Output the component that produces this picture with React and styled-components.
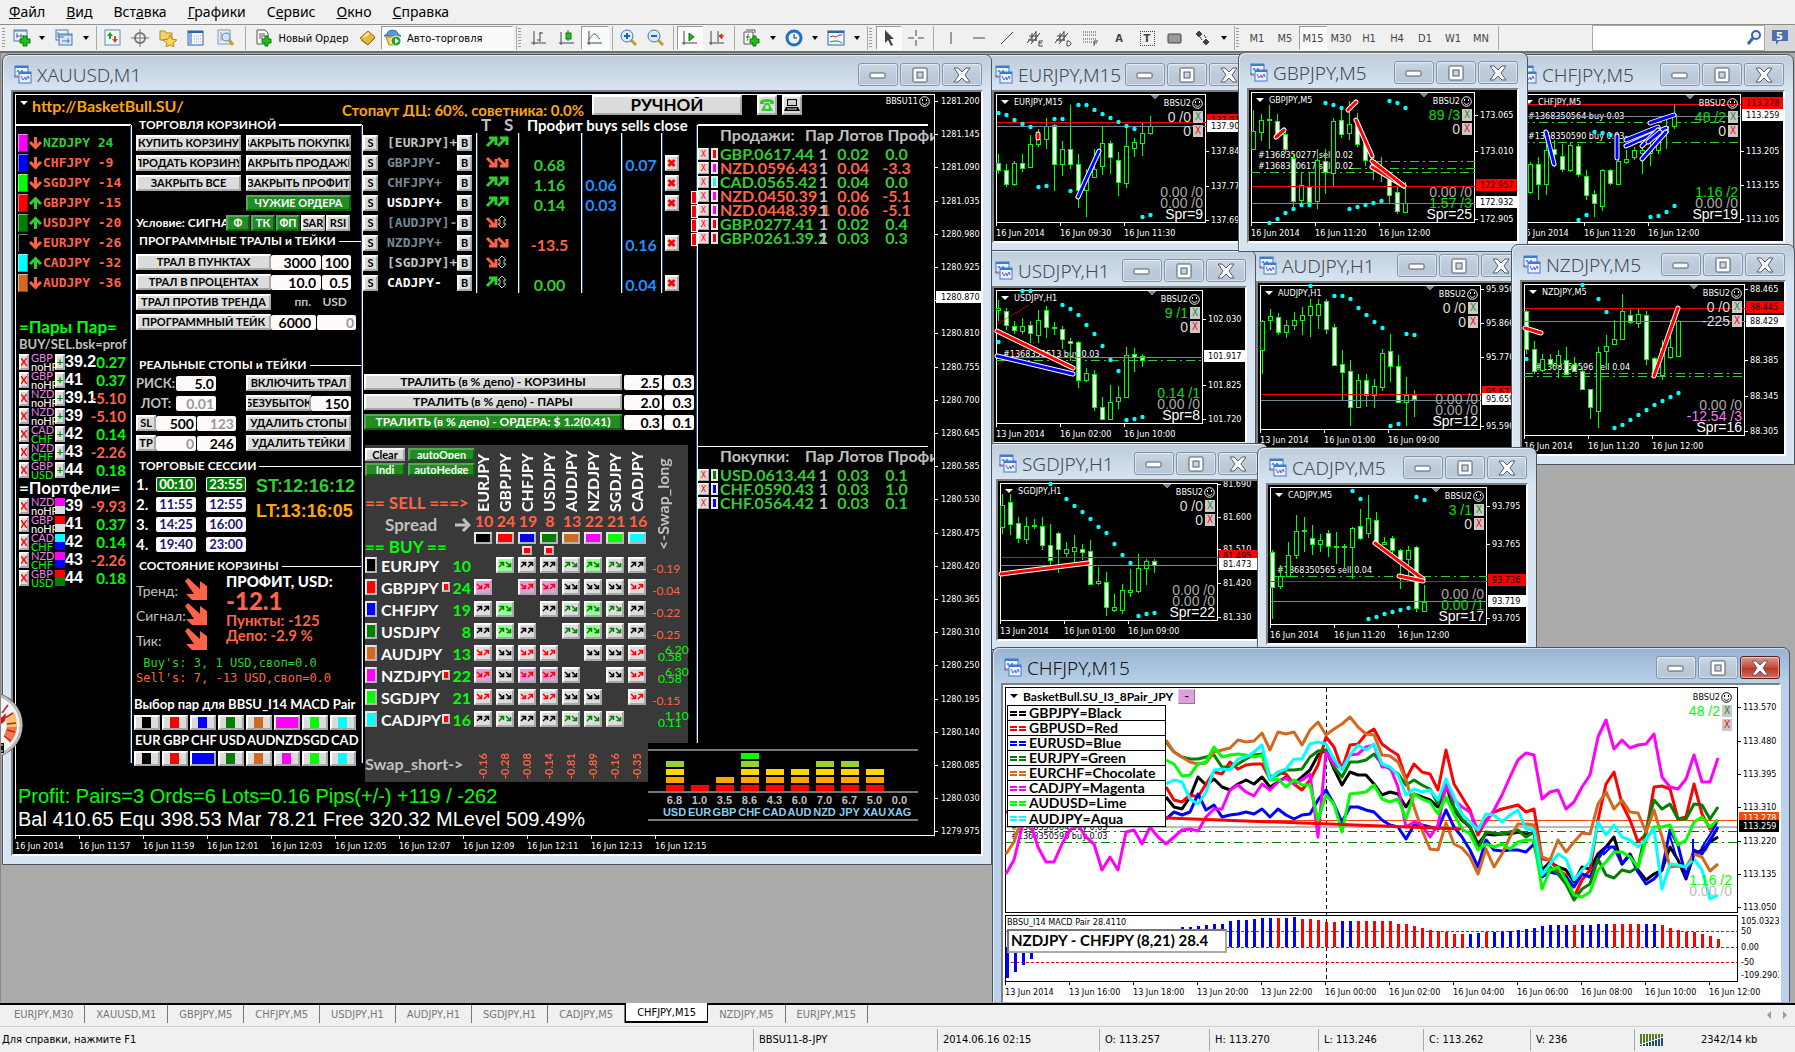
import React, { useState } from 'react'
import styled, { createGlobalStyle, css } from 'styled-components'

const UI = "'DejaVu Sans Condensed', 'Noto Sans', sans-serif"
const PANEL = "Lato, 'Open Sans', sans-serif"
const MONO = "'DejaVu Sans Mono', monospace"
const TITLE = "'Noto Sans', 'Open Sans', sans-serif"
const ARIAL = "'Liberation Sans', sans-serif"

const GlobalStyle = createGlobalStyle`
    * {
        box-sizing: border-box;
    }

    body {
        margin: 0;
        background: #ababab;
        font-family: ${UI};
        font-size: 11px;
    }

    button,
    input {
        font: inherit;
        margin: 0;
        padding: 0;
        border-radius: 0;
    }

    table {
        border-collapse: collapse;
        border-spacing: 0;
    }

    td,
    th {
        padding: 0;
        font-weight: inherit;
    }
`

const Page = styled.div`
    display: flex;
    flex-direction: column;
    height: 100vh;
    overflow: hidden;
`

/* ---------- menu and toolbar ---------- */

const MenuBar = styled.nav`
    display: flex;
    align-items: center;
    gap: 21px;
    height: 24px;
    padding: 0 9px 2px;
    background: #f0f0f0;
    font: 14px ${TITLE};

    a {
        color: #000;
        text-decoration: none;
    }
`

const ToolBar = styled.div`
    display: flex;
    align-items: center;
    height: 29px;
    padding-left: 4px;
    background: #f0f0f0;
    border-top: 1px solid #8e8e8e;
    border-bottom: 2px solid #6e6e6e;
    overflow: hidden;
`

const Tool = styled.button`
    display: flex;
    align-items: center;
    justify-content: ${(p) => (p.$start ? 'flex-start' : 'center')};
    gap: 5px;
    flex: none;
    width: ${(p) => p.$w || 28}px;
    height: 24px;
    padding-left: ${(p) => (p.$start ? 2 : 0)}px;
    border: 1px solid;
    border-color: ${(p) => (p.$on ? '#9a9a9a #fff #fff #9a9a9a' : 'transparent')};
    background: ${(p) => (p.$on ? '#fafafa' : 'transparent')};
    color: ${(p) => (p.$dark ? '#000' : '#444')};
    font-size: 11px;
    font-weight: ${(p) => (p.$bold ? 'bold' : 'normal')};
    white-space: nowrap;
`

const Caret = styled.span`
    flex: none;
    width: 14px;
    display: flex;
    justify-content: center;

    &::before {
        content: '';
        border: 3px solid transparent;
        border-top: 4px solid #000;
        border-bottom: 0;
    }
`

const Sep = styled.span`
    flex: none;
    width: 1px;
    height: 24px;
    margin: 0 3px;
    background: #a8a8a8;
`

const Grip = styled.span`
    flex: none;
    width: 3px;
    height: 21px;
    margin: 0 4px 0 -2px;
    background: repeating-linear-gradient(#999 0 1px, #f0f0f0 1px 3px);
`

const SearchBox = styled.label`
    display: flex;
    align-items: center;
    width: 173px;
    height: 26px;
    margin-left: auto;
    background: #fff;
    border: 1px solid #aaa;

    input {
        flex: 1;
        min-width: 0;
        border: 0;
        outline: 0;
    }
`

const Badge = styled.button`
    width: 30px;
    height: 26px;
    border: 0;
    background: #d8d8d8;
`

const INK = '#444'

const glyphs = {
    newChart: (
        <>
            <rect x="1" y="1" width="13" height="11" fill="#e8f2fc" stroke="#4a78b0" />
            <path d="M1 2h13M4 4v5M8 5v5M3 7h8" stroke="#4a78b0" fill="none" />
            <path d="M10 7h4v3h3v4h-3v3h-4v-3H7v-4h3z" fill="#19c519" stroke="#0a7a0a" />
        </>
    ),
    profiles: (
        <>
            <rect x="1" y="1" width="12" height="10" fill="#e8f2fc" stroke="#4a78b0" />
            <rect x="4" y="5" width="13" height="11" fill="#d6e7f8" stroke="#4a78b0" />
            <path d="M4 6h13M3 3v5h6M7 12h8M13 9v5" stroke="#4a78b0" fill="none" />
        </>
    ),
    market: (
        <>
            <rect x="1" y="1" width="15" height="15" fill="#f2f8ff" stroke="#5a8cc0" />
            <path d="M6 3l3 4H7v3H5V7H3z" fill="#19a519" />
            <path d="M11 14l3-4h-2V7h-2v3H8z" fill="#d04a1a" />
        </>
    ),
    aim: (
        <>
            <circle cx="9" cy="9" r="5" fill="none" stroke="#777" strokeWidth="2" />
            <path d="M9 0v18M0 9h18" stroke="#777" />
        </>
    ),
    star: (
        <>
            <path d="M1 2h5l1 2h6v7H1z" fill="#f0d468" stroke="#b08a20" />
            <path d="M11 6l2 4 5 1-4 3 1 4-4-2-4 2 1-4-4-3 5-1z" fill="#ffd84a" stroke="#b08a20" />
        </>
    ),
    navigator: (
        <>
            <rect x="1" y="2" width="15" height="14" fill="#f4f8fd" stroke="#2c62a8" />
            <path d="M1 3h15" stroke="#2c62a8" strokeWidth="2" />
            <rect x="2" y="4" width="3" height="11" fill="#7fb2e8" />
            <path d="M7 7h8M7 10h8M7 13h8" stroke="#9ab" strokeDasharray="1 1" />
        </>
    ),
    tester: (
        <>
            <rect x="1" y="1" width="12" height="14" fill="#e6edf5" stroke="#8298b0" />
            <path d="M4 3v9M10 3v4" stroke="#8298b0" />
            <circle cx="9" cy="8" r="4" fill="#cfe6fb" stroke="#6a92bd" />
            <path d="M12 11l4 5" stroke="#c89a28" strokeWidth="3" />
        </>
    ),
    order: (
        <>
            <path d="M2 1h8l3 3v11H2z" fill="#fff" stroke="#555" />
            <path d="M4 5h6M4 7h6M4 9h4" stroke="#555" />
            <path d="M10 7h3v3h3v4h-3v3h-3v-3H7v-4h3z" fill="#19c519" stroke="#0a7a0a" />
        </>
    ),
    book: (
        <>
            <path d="M1 9l8-7 7 6-7 8z" fill="#e8b83a" stroke="#9a6c10" />
            <path d="M2 11l7 5 7-7" fill="none" stroke="#9a6c10" />
            <path d="M5 8l5-4" stroke="#fff2b8" strokeWidth="2" />
        </>
    ),
    robot: (
        <>
            <path d="M3 5c0-5 11-5 11 0l3 2H0z" fill="#4d9fd6" stroke="#2a6f9f" />
            <path d="M2 8h13l-3 8H5z" fill="#f2d35a" stroke="#b08a20" />
            <circle cx="12" cy="12" r="5" fill="#1fa51f" stroke="#fff" />
            <path d="M11 9l4 3-4 3z" fill="#fff" />
        </>
    ),
    bars: <path d="M4 2v14M1 14h15M7 11h3M10 3v10M10 4h3" stroke={INK} fill="none" />,
    candle: (
        <>
            <path d="M3 3v13M1 14h15M10 1v11" stroke={INK} fill="none" />
            <rect x="8" y="4" width="5" height="6" fill="#25c225" stroke="#0a7a0a" />
        </>
    ),
    line: (
        <>
            <path d="M3 2v14M1 14h15" stroke={INK} fill="none" />
            <path d="M2 11c3-1 4-7 7-6s2 4 5 5" stroke="#2a8a2a" fill="none" />
        </>
    ),
    zoomIn: (
        <>
            <path d="M11 11l5 5" stroke="#c89a28" strokeWidth="3" />
            <circle cx="7" cy="7" r="6" fill="#d8ecfd" stroke="#3a76b8" />
            <path d="M4 7h6M7 4v6" stroke="#1f63b0" strokeWidth="2" />
        </>
    ),
    zoomOut: (
        <>
            <path d="M11 11l5 5" stroke="#c89a28" strokeWidth="3" />
            <circle cx="7" cy="7" r="6" fill="#d8ecfd" stroke="#3a76b8" />
            <path d="M4 7h6" stroke="#1f63b0" strokeWidth="2" />
        </>
    ),
    scroll: (
        <>
            <path d="M3 2v14M1 14h15" stroke={INK} fill="none" />
            <path d="M8 4l5 4-5 4z" fill="#25b225" stroke="#0a7a0a" />
        </>
    ),
    shift: (
        <>
            <path d="M3 2v14M1 14h15M10 2v11" stroke={INK} fill="none" />
            <path d="M16 7h-4M14 5l-3 2 3 3z" stroke="#c03a1a" fill="#c03a1a" />
        </>
    ),
    indicator: (
        <>
            <path d="M1 3h9v12H1z" fill="#fff" stroke="#555" />
            <path d="M3 1h9v3M6 5c-2 0-1 6-2 7M3 8h4" stroke="#555" fill="none" />
            <path d="M10 7h3v3h3v4h-3v3h-3v-3H7v-4h3z" fill="#19c519" stroke="#0a7a0a" />
        </>
    ),
    clock: (
        <>
            <circle cx="9" cy="9" r="7" fill="#eaf5ff" stroke="#1f6fc4" strokeWidth="3" />
            <path d="M9 5v4h3" stroke="#222" fill="none" />
        </>
    ),
    template: (
        <>
            <rect x="1" y="2" width="16" height="14" fill="#f2f8ff" stroke="#2c62a8" />
            <path d="M1 3h16" stroke="#2c62a8" strokeWidth="2" />
            <path d="M3 8l3-1 3 1 3-2 3 0" stroke="#a33" fill="none" />
            <path d="M3 13l4-1 4 0 4 2" stroke="#2a8a2a" fill="none" />
        </>
    ),
    cursor: <path d="M5 1v13l3-3 3 6 2-1-3-6h4z" fill={INK} />,
    cross: <path d="M9 1v6M9 11v6M1 9h6M11 9h6" stroke={INK} />,
    vline: <path d="M9 3v12" stroke={INK} />,
    hline: <path d="M3 9h12" stroke={INK} />,
    trend: <path d="M3 15L15 3" stroke={INK} />,
    chanE: (
        <>
            <path d="M1 14l9-11M5 15l9-11M3 7h9M2 11h9M6 4v9M10 2v10" stroke={INK} fill="none" />
            <path d="M17 12h-4v5h4M13 14h3" stroke={INK} fill="none" />
        </>
    ),
    chanD: (
        <>
            <path d="M1 14l9-11M5 15l9-11M3 7h9M2 11h9M6 4v9M10 2v10" stroke={INK} fill="none" />
            <path d="M13 12h2l2 2v1l-2 2h-2z" stroke={INK} fill="none" />
        </>
    ),
    fibo: (
        <>
            <path d="M1 3h14M1 6h14M1 10h14M1 13h9" stroke={INK} strokeDasharray="1 1" />
            <path d="M16 12h-4v5M12 14h3" stroke={INK} fill="none" />
        </>
    ),
    rect: <rect x="2" y="5" width="13" height="9" rx="1" fill="#999" stroke={INK} />,
    arrows: <path d="M5 2l3 3-3 3-3-3zM12 10l3 3-3 3-3-3zM6 8l2 3M10 6l2 3" fill={INK} stroke={INK} />,
    search: (
        <>
            <circle cx="10" cy="6" r="4" fill="#e4f0ff" stroke="#3a62b8" strokeWidth="2" />
            <path d="M7 9l-5 6" stroke="#3a62b8" strokeWidth="3" />
        </>
    )
}

const Glyph = ({ name }) => (
    <svg width="18" height="18" viewBox="0 0 18 18" aria-hidden="true">
        {glyphs[name]}
    </svg>
)

const LabelTool = styled(Tool)`
    span {
        width: 15px;
        border: 1px dotted #444;
        line-height: 13px;
    }
`

const menu = [
    ['', 'Ф', 'айл'],
    ['', 'В', 'ид'],
    ['Вст', 'а', 'вка'],
    ['', 'Г', 'рафики'],
    ['С', 'е', 'рвис'],
    ['', 'О', 'кно'],
    ['', 'С', 'правка']
]

/* ---------- child windows ---------- */

const Desktop = styled.main`
    position: relative;
    flex: 1;
    min-height: 0;
    overflow: hidden;
    background: #ababab;
    border-left: 1px solid #888;
`

const Win = styled.section`
    position: absolute;
    left: ${(p) => p.$x}px;
    top: ${(p) => p.$y}px;
    width: ${(p) => p.$w}px;
    height: ${(p) => p.$h}px;
    display: flex;
    flex-direction: column;
    padding: 0 8px 8px;
    border: 1px solid #4c5561;
    border-radius: 7px 7px 0 0;
    background: ${(p) =>
        p.$active
            ? 'linear-gradient(#99b4d1, #b9d1ea 36px)'
            : 'linear-gradient(#bfcddb, #d7e4f2 36px)'};
    box-shadow: inset 1px 1px 0 rgba(255, 255, 255, 0.6);
`

const TitleBar = styled.header`
    display: flex;
    align-items: center;
    flex: none;
    height: 35px;
    padding: 4px 1px 0 3px;

    h2 {
        flex: 1;
        margin: 0 0 0 5px;
        font: 300 19px ${TITLE};
        color: ${(p) => (p.$active ? '#111' : '#444b52')};
        white-space: nowrap;
    }
`

const WinButton = styled.button`
    display: flex;
    align-items: center;
    justify-content: center;
    width: 40px;
    height: 23px;
    margin-left: 2px;
    border: 1px solid ${(p) => (p.$red ? '#5a1f1f' : '#8494aa')};
    border-radius: 3px;
    background: ${(p) =>
        p.$red
            ? 'linear-gradient(#dc9a90, #c4483a 50%, #b83422 52%, #d0705a)'
            : 'linear-gradient(#cbd8e6, #bccad9 50%, #b9c8d8)'};
    box-shadow: inset 0 0 0 1px rgba(255, 255, 255, 0.45);
`

const View = styled.div`
    flex: 1;
    min-height: 0;
    display: grid;
    grid-template: minmax(0, 1fr) / minmax(0, 1fr);
    border: 2px solid;
    border-color: #808080 #fff #fff #808080;
    background: ${(p) => (p.$light ? '#fff' : '#000')};
    overflow: hidden;

    > * {
        grid-area: 1 / 1;
    }
`

const Svg = styled.svg`
    display: block;
    font: 9px ${UI};
`

const WinIcon = () => (
    <svg width="18" height="19" viewBox="0 0 18 19" aria-hidden="true">
        <rect x="1" y="1" width="13" height="11" fill="#e8f1fc" stroke="#3f7ad0" />
        <path d="M1 2h13" stroke="#3f7ad0" strokeWidth="2" />
        <path d="M3 7l1-2 2 4 2-4 1 3" stroke="#3f7ad0" fill="none" />
        <path d="M0 11h4" stroke="#e04040" />
        <rect x="5" y="7" width="12" height="11" fill="#e8f1fc" stroke="#3f7ad0" />
        <path d="M5 8h12" stroke="#3f7ad0" strokeWidth="2" />
        <path d="M7 11l2 4 2-3 1 3 2-4 1 3" stroke="#6a62c8" fill="none" />
    </svg>
)

const buttonGlyph = {
    min: <rect x="3" y="6" width="15" height="5" rx="1" fill="#fff" stroke="#555b66" />,
    max: (
        <>
            <rect x="4" y="1" width="14" height="14" rx="1" fill="#fff" stroke="#555b66" />
            <rect x="8" y="5" width="6" height="6" fill="#c8d4e2" stroke="#555b66" />
        </>
    ),
    close: (
        <path
            d="M3 1h4l4 4 4-4h4l-5 7 5 7h-4l-4-4-4 4H3l5-7z"
            fill="#fff"
            stroke="#555b66"
            strokeLinejoin="round"
        />
    )
}

const Window = ({ title, x, y, w, h, active, light, children }) => (
    <Win $x={x - 1} $y={y - 53} $w={w} $h={h} $active={active}>
        <TitleBar $active={active}>
            <WinIcon />
            <h2>{title}</h2>
            {['min', 'max', 'close'].map((kind) => (
                <WinButton key={kind} aria-label={kind} $red={active && kind === 'close'}>
                    <svg width="22" height="16" viewBox="0 0 22 16">
                        {buttonGlyph[kind]}
                    </svg>
                </WinButton>
            ))}
        </TitleBar>
        <View $light={light}>{children}</View>
    </Win>
)

const Smiley = ({ color }) => (
    <svg width="11" height="11" viewBox="0 0 11 11" aria-hidden="true">
        <circle cx="5.5" cy="5.5" r="4.8" fill="none" stroke={color} />
        <path d="M3 6.500c1 2.500 4 2.500 5 0" fill="none" stroke={color} />
        <rect x="3" y="3" width="1" height="2" fill={color} />
        <rect x="7" y="3" width="1" height="2" fill={color} />
    </svg>
)

/* ---------- small candle charts ---------- */

const LIME = '#00ff00'
const step = (i) => 2 + i * 8

const Chart = ({ w, h, axis, data }) => (
    <Svg width={w + axis + 2} height={h + 20} fill="#fff" shapeRendering="crispEdges">
        <g transform="translate(2 2)">
            <rect x="0.500" y="0.500" width={w - 1} height={h - 1} fill="none" stroke="#fff" />
            {(data.dash || []).map(([y, from = 0]) => (
                <path key={y} d={`M${from} ${y + 0.5}H${w}`} stroke="#32cd32" strokeDasharray="9 4 2 4" />
            ))}
            {(data.orders || []).map(([x, y, text]) => (
                <text key={text} x={x} y={y + 3}>
                    {text}
                </text>
            ))}
            {data.candles.map(([hi, lo, top, bottom, full], i) => (
                <g key={i} stroke={LIME}>
                    <path d={`M${step(i) + 0.5} ${hi}V${lo}`} />
                    <rect
                        x={step(i) - 1.5}
                        y={top + 0.5}
                        width="4"
                        height={Math.max(1, bottom - top)}
                        fill={full ? '#fff' : '#000'}
                    />
                </g>
            ))}
            {data.ask && <path d={`M1 ${data.ask + 0.5}H${w}`} stroke="#f00" />}
            <path d={`M1 ${data.bid + 0.5}H${w}`} stroke="#778899" />
            <g shapeRendering="auto">
                {data.dots.map(([i, y]) => (
                    <circle key={`${i}-${y}`} cx={step(i) + 0.5} cy={y} r="2.2" fill="#0ff" />
                ))}
                {(data.thin || []).map((d) => (
                    <path key={d} d={d} stroke="#f00" strokeDasharray="2 1" />
                ))}
                {(data.trades || []).map(([color, d]) => (
                    <g key={d} fill="none" strokeLinecap="round">
                        <path d={d} stroke="#fff" strokeWidth="5" />
                        <path d={d} stroke={color} strokeWidth="3" />
                    </g>
                ))}
            </g>
            <path d={`M${w - 55} 1h8l-4 5z`} fill="#778899" />
            {data.prices.map(([y, text, kind]) => (
                <g key={text}>
                    {kind ? (
                        <rect x={w + 1} y={y - 6} width={axis} height="12" fill={kind === 'ask' ? '#f00' : '#fff'} />
                    ) : (
                        <path d={`M${w} ${y + 0.5}h3`} stroke="#fff" />
                    )}
                    <text x={w + 5} y={y + 3} fill={kind ? '#000' : '#fff'}>
                        {text}
                    </text>
                </g>
            ))}
            {data.times.map((text, i) => (
                <g key={text}>
                    <path d={`M${i * 64 + 0.5} ${h}v3`} stroke="#fff" />
                    <text x={i * 64} y={h + 13}>
                        {text}
                    </text>
                </g>
            ))}
        </g>
    </Svg>
)

const ChartInfo = styled.div`
    display: grid;
    grid-template-columns: 1fr auto;
    align-content: space-between;
    width: ${(p) => p.$w}px;
    height: ${(p) => p.$h}px;
    padding: 5px 3px 3px 7px;
    color: #fff;
    font: 14px/13px ${ARIAL};
`

const ChartName = styled.div`
    display: flex;
    align-items: center;
    align-self: ${(p) => (p.$bold ? 'center' : 'start')};
    gap: 5px;
    height: 10px;
    font: ${(p) => (p.$bold ? `bold 12px ${PANEL}` : `9px ${UI}`)};

    &::before {
        content: '';
        border: 4px solid transparent;
        border-top: 4px solid currentColor;
        border-bottom: 0;
    }
`

const Expert = styled.div`
    display: flex;
    align-items: center;
    justify-content: flex-end;
    gap: 1px;
    height: 12px;
    margin: 0 0 2px auto;
    color: ${(p) => p.$c || '#fff'};
    font: 9px ${UI};
`

const Count = styled.div`
    display: flex;
    justify-content: flex-end;
    gap: 2px;
    height: 14px;
    color: ${(p) => p.$c};
`

const Sums = styled.div`
    grid-column: 1 / -1;
    padding-top: ${(p) => p.$top || 0}px;
    text-align: right;
`

const Sum = styled.div`
    height: ${(p) => (p.$last ? 12 : 11)}px;
    color: ${(p) => p.$c};
`

const CloseX = styled.button`
    width: 10px;
    height: 12px;
    border: 0;
    background: #c8c8c8;
    color: ${(p) => p.$c};
    font: 10px/12px ${UI};
`

const GRAY = '#a9a9a9'
const GREEN = '#00e000'

const CandleWindow = ({ title, x, y, w, h, axis, data }) => {
    const pw = w - axis - 24
    const ph = h - 69
    const [orders, other, sum1, sum2, spread] = data.info
    return (
        <Window title={title} x={x} y={y} w={w} h={h}>
            <Chart w={pw} h={ph} axis={axis} data={data} />
            <ChartInfo $w={pw + 2} $h={ph + 2}>
                <ChartName>{title}</ChartName>
                <div>
                    <Expert>
                        BBSU2
                        <Smiley color="#fff" />
                    </Expert>
                    <Count $c={orders[1]}>
                        {orders[0]}
                        <CloseX $c="#228b22">X</CloseX>
                    </Count>
                    <Count $c="#dcdcdc">
                        {other}
                        <CloseX $c="#f00">X</CloseX>
                    </Count>
                </div>
                <Sums>
                    <Sum $c={sum1[1]}>{sum1[0]}</Sum>
                    <Sum $c={sum2[1]}>{sum2[0]}</Sum>
                    <Sum $c="#fff" $last>
                        {spread}
                    </Sum>
                </Sums>
            </ChartInfo>
        </Window>
    )
}

const charts = [
    {
        title: 'CHFJPY,M5', x: 1507, y: 54, w: 287, h: 198, axis: 42,
        data: {
            candles: [
                [68, 98, 72, 95], [68, 100, 70, 98], [63, 106, 70, 90, 1], [40, 101, 56, 90],
                [46, 73, 55, 60, 1], [50, 78, 62, 75, 1], [48, 78, 51, 76], [50, 83, 52, 80, 1],
                [76, 106, 82, 101, 1], [96, 123, 100, 109, 1], [75, 117, 76, 112], [75, 91, 76, 89, 1],
                [66, 90, 67, 90], [56, 70, 65, 68], [53, 66, 56, 63], [48, 80, 56, 59],
                [48, 72, 56, 59], [35, 60, 39, 56], [26, 55, 32, 38], [11, 35, 21, 32]
            ],
            dots: [[9, 38], [10, 39], [11, 41], [13, 44], [7, 126], [8, 121], [16, 123], [17, 122], [18, 118], [19, 112]],
            ask: 10, bid: 22, dash: [[28], [48]],
            orders: [[8, 22, '#1368350564 buy 0.03'], [8, 42, '#1368350590 buy 0.03']],
            trades: [
                ['#00f', 'M26 38L34 70'], ['#00f', 'M97 42V64'], ['#00f', 'M130 29L154 21'],
                ['#00f', 'M106 46L138 33'], ['#00f', 'M106 52L146 34'], ['#00f', 'M122 52L138 36'],
                ['#00f', 'M122 65L146 38'], ['#00f', 'M128 48L140 38']
            ],
            prices: [[57, '113.205'], [91, '113.155'], [125, '113.105'], [9, '113.278', 'ask'], [21, '113.259', 'bid']],
            times: ['16 Jun 2014', '16 Jun 11:20', '16 Jun 12:00'],
            info: [['48 /2', GREEN], '0', ['1.16 /2', GREEN], ['0.00 /0', GRAY], 'Spr=19']
        }
    },
    {
        title: 'EURJPY,M15', x: 983, y: 54, w: 276, h: 198, axis: 42,
        data: {
            candles: [
                [60, 80, 69, 76, 1], [70, 93, 76, 90, 1], [67, 92, 69, 90], [60, 78, 69, 74, 1],
                [41, 73, 50, 73], [35, 53, 45, 50], [24, 55, 32, 45], [30, 97, 31, 70, 1],
                [47, 82, 55, 70], [11, 75, 55, 70, 1], [60, 114, 70, 96, 1], [75, 123, 83, 96],
                [55, 84, 75, 83], [32, 81, 49, 72], [47, 80, 49, 63, 1], [58, 102, 66, 88, 1],
                [32, 94, 52, 89], [44, 63, 48, 54], [29, 62, 39, 49], [22, 41, 32, 39]
            ],
            dots: [
                [0, 19], [1, 21], [2, 26], [3, 30], [4, 33], [7, 25], [8, 25], [10, 11], [11, 11], [12, 16],
                [13, 20], [14, 24], [15, 28], [16, 32], [17, 35], [5, 93], [6, 92], [9, 97], [18, 123], [19, 121]
            ],
            ask: 28, bid: 32,
            trades: [['#f00', 'M42 40V44'], ['#00f', 'M82 103L103 57']],
            prices: [[57, '137.845'], [92, '137.770'], [126, '137.695'], [26, '137.918', 'ask'], [32, '137.909', 'bid']],
            times: ['16 Jun 2014', '16 Jun 09:30', '16 Jun 11:30'],
            info: [['0 /0', '#dcdcdc'], '0', ['0.00 /0', GRAY], ['0.00 /0', GRAY], 'Spr=9']
        }
    },
    {
        title: 'AUDJPY,H1', x: 1247, y: 245, w: 284, h: 214, axis: 39,
        data: {
            candles: [
                [35, 89, 36, 65], [24, 45, 31, 35], [28, 50, 32, 47, 1], [35, 53, 40, 47],
                [27, 45, 35, 40], [22, 50, 30, 35], [14, 52, 21, 30], [14, 44, 19, 30],
                [14, 49, 16, 44, 1], [39, 80, 42, 80, 1], [65, 115, 79, 87, 1], [75, 141, 86, 122, 1],
                [89, 122, 95, 122], [89, 122, 95, 110, 1], [94, 123, 101, 110], [64, 106, 68, 102],
                [49, 97, 66, 81, 1], [70, 118, 81, 117, 1], [92, 141, 110, 117], [105, 132, 110, 114, 1]
            ],
            dots: [
                [6, 1], [9, 11], [10, 11], [11, 14], [12, 23], [13, 30], [14, 37], [15, 43],
                [18, 49], [19, 50], [16, 141], [17, 139]
            ],
            ask: 109, bid: 115,
            prices: [
                [4, '95.950'], [38, '95.860'], [72, '95.770'], [141, '95.590'],
                [107, '95.673', 'ask'], [114, '95.659', 'bid']
            ],
            times: ['13 Jun 2014', '16 Jun 01:00', '16 Jun 09:00'],
            info: [['0 /0', '#dcdcdc'], '0', ['0.00 /0', GRAY], ['0.00 /0', GRAY], 'Spr=12']
        }
    },
    {
        title: 'USDJPY,H1', x: 983, y: 250, w: 273, h: 203, axis: 42,
        data: {
            candles: [
                [10, 31, 18, 20], [18, 40, 21, 35, 1], [31, 44, 36, 40, 1], [28, 44, 36, 41],
                [31, 53, 35, 43, 1], [20, 53, 30, 45], [16, 48, 20, 37, 1], [32, 45, 37, 38],
                [36, 59, 39, 49, 1], [48, 71, 51, 53, 1], [51, 98, 52, 90, 1], [78, 92, 83, 90],
                [80, 121, 84, 117, 1], [107, 130, 117, 129, 1], [95, 129, 112, 129], [96, 119, 107, 111],
                [57, 107, 65, 107], [58, 82, 64, 67, 1], [64, 77, 66, 70, 1]
            ],
            dots: [
                [0, 52], [3, 1], [4, 1], [8, 15], [9, 19], [10, 25], [11, 35], [12, 44], [13, 56],
                [14, 70], [15, 81], [16, 130], [17, 129], [18, 127]
            ],
            bid: 67, dash: [[70]],
            thin: ['M1 34L33 15', 'M1 75L39 52'],
            orders: [[7, 64, '#1368350613 buy 0.03']],
            trades: [['#f00', 'M1 41L77 78'], ['#00f', 'M1 66L77 84']],
            prices: [[29, '102.030'], [95, '101.825'], [129, '101.720'], [66, '101.917', 'bid']],
            times: ['13 Jun 2014', '16 Jun 02:00', '16 Jun 10:00'],
            info: [['9 /1', GREEN], '0', ['0.14 /1', GREEN], ['0.00 /0', GRAY], 'Spr=8']
        }
    },
    {
        title: 'GBPJPY,M5', x: 1238, y: 52, w: 290, h: 200, axis: 42,
        data: {
            candles: [
                [18, 57, 39, 57], [22, 49, 28, 40], [13, 57, 27, 28, 1], [22, 46, 29, 44, 1],
                [38, 62, 42, 57, 1], [62, 115, 66, 109, 1], [80, 112, 93, 108], [80, 115, 95, 110, 1],
                [57, 117, 68, 109], [57, 102, 69, 80, 1], [26, 95, 29, 81], [17, 46, 28, 42, 1],
                [9, 48, 32, 41], [21, 55, 33, 52, 1], [47, 74, 51, 68, 1], [62, 88, 68, 77, 1],
                [65, 90, 76, 80, 1], [83, 112, 84, 103, 1], [95, 122, 100, 119, 1], [90, 120, 111, 120]
            ],
            dots: [
                [9, 11], [10, 13], [11, 16], [17, 9], [18, 11], [19, 16], [2, 131], [3, 127], [4, 121], [5, 117],
                [6, 113], [7, 113], [12, 117], [13, 115], [14, 113], [15, 111], [16, 109]
            ],
            ask: 94, bid: 111, dash: [[69, 121], [76, 101], [80]],
            orders: [[7, 63, '#1368350277 sell 0.02'], [7, 74, '#1368350617 sell 0.02']],
            trades: [
                ['#f00', 'M25 45L33 38'], ['#f00', 'M97 18L105 10'], ['#f00', 'M105 28L121 64'],
                ['#f00', 'M121 75L153 94'], ['#f00', 'M121 69L153 94']
            ],
            prices: [[23, '173.065'], [59, '173.010'], [127, '172.905'], [93, '172.957', 'ask'], [110, '172.932', 'bid']],
            times: ['16 Jun 2014', '16 Jun 11:20', '16 Jun 12:00'],
            info: [['89 /3', GREEN], '0', ['0.00 /0', GRAY], ['1.57 /3', GREEN], 'Spr=25']
        }
    },
    {
        title: 'NZDJPY,M5', x: 1511, y: 244, w: 284, h: 221, axis: 39,
        data: {
            candles: [
                [26, 70, 27, 65, 1], [57, 90, 65, 87, 1], [70, 88, 75, 86], [70, 86, 75, 80, 1],
                [66, 94, 71, 81], [63, 91, 76, 90, 1], [73, 88, 80, 87, 1], [83, 105, 87, 105, 1],
                [105, 135, 105, 123, 1], [63, 144, 68, 127], [51, 85, 62, 67], [36, 61, 55, 60],
                [10, 56, 27, 55], [26, 40, 31, 38, 1], [25, 44, 30, 39], [27, 81, 31, 75, 1],
                [73, 93, 74, 91, 1], [56, 96, 64, 91], [36, 75, 63, 73], [36, 73, 37, 72]
            ],
            dots: [
                [0, 75], [7, 1], [9, 15], [10, 28], [11, 144], [12, 141], [13, 136], [14, 131], [15, 126],
                [16, 121], [17, 117], [18, 113], [19, 109]
            ],
            ask: 24, bid: 37, dash: [[89], [92]],
            orders: [[11, 83, '#1368350596 sell 0.04']],
            trades: [['#f00', 'M1 44L17 49'], ['#f00', 'M130 92L154 24']],
            prices: [
                [5, '88.465'], [76, '88.385'], [112, '88.345'], [147, '88.305'],
                [23, '88.445', 'ask'], [37, '88.429', 'bid']
            ],
            times: ['16 Jun 2014', '16 Jun 11:20', '16 Jun 12:00'],
            info: [['0 /0', '#dcdcdc'], '-225', ['0.00 /0', GRAY], ['-12.54 /3', '#ee82ee'], 'Spr=16']
        }
    },
    {
        title: 'SGDJPY,H1', x: 987, y: 443, w: 281, h: 207, axis: 39,
        data: {
            candles: [
                [11, 51, 22, 44], [11, 52, 19, 41, 1], [34, 60, 40, 55, 1], [34, 61, 43, 56],
                [36, 46, 42, 43], [34, 67, 43, 62, 1], [41, 82, 62, 77, 1], [49, 90, 50, 66, 1],
                [59, 74, 66, 70], [52, 79, 64, 68], [61, 77, 66, 69, 1], [57, 101, 68, 101, 1],
                [84, 102, 98, 100], [89, 133, 99, 124, 1], [111, 129, 124, 127], [101, 131, 107, 127],
                [86, 114, 107, 109], [71, 110, 85, 108], [76, 102, 78, 85], [76, 90, 78, 82, 1]
            ],
            dots: [
                [6, 1], [8, 16], [9, 23], [10, 29], [11, 36], [12, 44], [13, 50], [14, 61], [15, 72],
                [16, 80], [17, 133], [18, 131], [19, 130]
            ],
            ask: 74, bid: 82,
            trades: [['#f00', 'M1 91L88 80']],
            prices: [
                [1, '81.690'], [34, '81.600'], [66, '81.510'], [100, '81.420'], [134, '81.330'],
                [73, '81.495', 'ask'], [81, '81.473', 'bid']
            ],
            times: ['13 Jun 2014', '16 Jun 01:00', '16 Jun 09:00'],
            info: [['0 /0', '#dcdcdc'], '0', ['0.00 /0', GRAY], ['0.00 /0', GRAY], 'Spr=22']
        }
    },
    {
        title: 'CADJPY,M5', x: 1257, y: 447, w: 280, h: 207, axis: 39,
        data: {
            candles: [
                [63, 132, 65, 100, 1], [78, 102, 89, 99], [55, 90, 68, 89], [28, 72, 44, 68],
                [30, 65, 43, 44], [38, 68, 51, 57, 1], [47, 65, 53, 57], [43, 70, 46, 59, 1],
                [45, 77, 59, 60], [57, 82, 59, 60], [40, 92, 41, 60], [22, 53, 39, 51, 1],
                [8, 51, 31, 46], [25, 58, 33, 56, 1], [50, 58, 55, 57], [49, 67, 51, 63, 1],
                [62, 102, 63, 72, 1], [59, 93, 63, 72], [59, 125, 60, 121, 1], [98, 125, 115, 124]
            ],
            dots: [
                [10, 4], [11, 12], [18, 10], [19, 13], [12, 132], [13, 130], [14, 127], [15, 125],
                [16, 123], [17, 121]
            ],
            ask: 94, bid: 114, dash: [[89]],
            orders: [[7, 83, '#1368350565 sell 0.04']],
            trades: [['#f00', 'M105 56L153 92'], ['#f00', 'M129 89L153 94']],
            prices: [
                [19, '93.795'], [57, '93.765'], [131, '93.705'],
                [93, '93.736', 'ask'], [114, '93.719', 'bid']
            ],
            times: ['16 Jun 2014', '16 Jun 11:20', '16 Jun 12:00'],
            info: [['3 /1', GREEN], '0', ['0.00 /0', GRAY], ['0.00 /1', GREEN], 'Spr=17']
        }
    }
]

/* ---------- CHFJPY,M15 comparison chart ---------- */

const series = [
    ['#000', 20, [470, 500, 505, 470, 410, 435, 415, 440, 450, 430, 420, 430, 410, 440, 425, 410, 430, 410, 390, 345, 330, 385, 435, 395, 405, 405, 430, 465, 455, 460, 500, 460, 470, 480, 500, 435, 510, 540, 560, 610, 580, 585, 580, 580, 575, 580, 578, 690, 665, 680, 690, 725, 680, 685, 640, 620, 590, 670, 640, 690, 720, 700, 690, 620, 660, 715, 640, 630, 605, 590]],
    ['#f00', 20, [440, 480, 485, 465, 470, 430, 395, 400, 365, 385, 375, 370, 370, 415, 395, 400, 430, 450, 420, 375, 290, 320, 385, 315, 310, 280, 265, 310, 330, 345, 415, 370, 395, 400, 450, 330, 430, 470, 510, 585, 540, 515, 505, 500, 495, 515, 505, 655, 660, 690, 705, 770, 720, 690, 540, 430, 395, 490, 540, 605, 580, 440, 438, 445, 535, 530, 430, 520, 565, 540]],
    ['#00f', 20, [535, 515, 525, 515, 460, 510, 495, 530, 525, 520, 515, 520, 505, 530, 505, 525, 535, 525, 520, 480, 450, 490, 545, 500, 500, 510, 515, 540, 555, 560, 595, 555, 555, 560, 565, 510, 560, 590, 630, 680, 600, 630, 632, 630, 630, 635, 610, 710, 695, 700, 710, 740, 700, 710, 655, 620, 620, 670, 645, 695, 730, 715, 690, 570, 615, 710, 630, 640, 600, 560]],
    ['#008000', 20, [305, 335, 350, 355, 355, 350, 345, 380, 380, 370, 355, 345, 340, 410, 405, 390, 388, 385, 350, 332, 330, 380, 410, 365, 365, 360, 340, 370, 385, 400, 435, 420, 435, 445, 490, 420, 500, 535, 560, 625, 575, 578, 580, 575, 570, 590, 575, 700, 680, 700, 730, 780, 745, 730, 655, 705, 712, 690, 695, 680, 570, 480, 505, 490, 535, 535, 490, 495, 535, 500]],
    ['#d2691e', 0, [640, 605, 530, 480]],
    ['#d2691e', 20, [298, 335, 350, 365, 372, 368, 335, 330, 322, 300, 305, 303, 278, 330, 275, 280, 275, 315, 270, 245, 285, 265, 250, 230, 260, 280, 285, 345, 348, 365, 420, 500, 570, 625, 628, 548, 610, 622, 650, 700, 625, 680, 640, 590, 550, 550, 555, 650, 658, 600, 635, 605, 578, 582, 490, 455, 505, 480, 515, 518, 575, 510, 590, 680, 678, 680, 640, 650, 693, 672]],
    ['#f0f', 0, [700, 660, 560, 545, 620, 665, 665, 610, 570, 555, 590, 610, 690, 650, 690, 575, 570, 612, 560, 590, 610, 590, 570, 565, 572, 530, 505, 505, 450, 435, 455, 468, 430, 450, 425, 412, 430, 420, 400, 590, 335, 370, 385, 345, 340, 320, 315, 380, 380, 440, 560, 545, 555, 590, 555, 435, 480, 500, 515, 570, 545, 510, 465, 410, 360, 338, 345, 475, 455, 450, 505, 485, 440, 405, 290, 240, 325, 300, 322, 315, 310, 280, 410, 440, 445, 415, 345, 425, 425, 352]],
    ['#0f0', 20, [360, 370, 408, 405, 370, 365, 320, 350, 345, 340, 345, 350, 345, 420, 415, 440, 418, 435, 435, 540, 465, 490, 575, 460, 458, 455, 435, 475, 485, 475, 535, 460, 475, 485, 520, 470, 520, 565, 580, 630, 610, 620, 610, 625, 605, 600, 600, 745, 690, 680, 720, 765, 770, 755, 690, 665, 635, 635, 650, 680, 600, 560, 560, 555, 615, 600, 545, 530, 560, 540]],
    ['#0ff', 20, [430, 420, 425, 475, 490, 455, 390, 385, 390, 355, 350, 335, 315, 415, 395, 385, 355, 355, 310, 305, 310, 355, 390, 345, 315, 330, 310, 370, 380, 405, 465, 445, 455, 450, 480, 415, 470, 520, 545, 570, 520, 525, 545, 525, 510, 565, 570, 705, 670, 640, 655, 720, 690, 665, 545, 585, 555, 590, 600, 620, 595, 565, 745, 670, 675, 680, 655, 690, 775, 765]]
]

const macd = [860, 860, 858, 855, 852, 850, 843, 838, 838, 835, 833, 833, 833, 833, 831, 835, 835, 840, 845, 845, 843, 843, 843, 843, 843, 843, 843, 850, 852, 858, 863, 870, 873, 876, 880, 880, 880, 878, 876, 876, 874, 872, 868, 865, 862, 858, 855, 855, 855, 855, 855, 855, 852, 850, 852, 852, 852, 852, 852, 850, 853, 862, 870, 874, 876, 880, 888, 895]
const macdColors = 'bbbbbbbbbbbbrbbrrrrrbbrrrrrrrrrrrrrrbbrbbbbbbbbbbrbbbbrrrrbbrrrrrrrr'

const legend = [
    ['GBPJPY=Black', '#000'],
    ['GBPUSD=Red', '#f00'],
    ['EURUSD=Blue', '#00f'],
    ['EURJPY=Green', '#008000'],
    ['EURCHF=Chocolate', '#d2691e'],
    ['CADJPY=Magenta', '#f0f'],
    ['AUDUSD=Lime', '#0f0'],
    ['AUDJPY=Aqua', '#0ff']
]

const bigPrices = [
    [20, '113.570'], [54, '113.480'], [87, '113.395'], [120, '113.310'], [154, '113.220'],
    [187, '113.135'], [220, '113.050'], [131, '113.278', '#ff4500'], [139, '113.259', '#000']
]

const bigTimes = [
    '13 Jun 2014', '13 Jun 16:00', '13 Jun 18:00', '13 Jun 20:00', '13 Jun 22:00', '16 Jun 00:00',
    '16 Jun 02:00', '16 Jun 04:00', '16 Jun 06:00', '16 Jun 08:00', '16 Jun 10:00', '16 Jun 12:00'
]

const level = (v) => Math.round((v - 140) / 3)

const CompareChart = () => (
    <Svg width="778" height="317" fill="#000" shapeRendering="crispEdges">
        <g transform="translate(2 2)">
            <rect x="0.500" y="0.500" width="732" height="225" fill="none" stroke="#000" />
            <rect x="0.500" y="228.500" width="732" height="66" fill="none" stroke="#000" />
            <path d="M1 144.500H732M1 155.500H732" stroke="#008000" strokeDasharray="9 4 2 4" />
            <path d="M1 139.500H732" stroke="#b8b8b8" strokeWidth="2" />
            <path d="M250 133.500H732" stroke="#ff4500" />
            <path d="M321.500 1V295" stroke="#000" strokeDasharray="4 3" />
            <text x="6" y="143">
                #1368350564 buy 0.03
            </text>
            <text x="6" y="152">
                #1368350590 buy 0.03
            </text>
            <g fill="none" strokeWidth="3" shapeRendering="auto" strokeLinejoin="round">
                {series.map(([color, start, values], n) => (
                    <polyline
                        key={n}
                        stroke={color}
                        points={values.map((v, i) => `${(start + i) * 8 + 1},${level(v)}`).join(' ')}
                    />
                ))}
                <path d="M1 125L456 142" stroke="#f00" />
                <path
                    d="M598 168l8 -8M664 146l8 26M688 152v22M696 162l16 -26M700 164l12 -22"
                    stroke="#00f"
                    strokeWidth="2"
                />
            </g>
            <path d="M1 244.500H732M1 260.500H732M1 275.500H732" stroke="#f00" strokeDasharray="3 2" />
            {[1013, 995, 975, 957].map((v, i) => (
                <path key={v} d={`M${i * 8 + 2} 260V${level(v)}`} stroke="#00f" strokeWidth="3" />
            ))}
            {macd.map((v, i) => (
                <path
                    key={i}
                    d={`M${(i + 22) * 8 + 1} 260V${level(v)}`}
                    stroke={macdColors[i] === 'b' ? '#00f' : '#f00'}
                    strokeWidth="3"
                />
            ))}
            {bigPrices.map(([y, text, fill]) => (
                <g key={text}>
                    {fill ? (
                        <rect x="734" y={y - 6} width="42" height="12" fill={fill} />
                    ) : (
                        <path d={`M733 ${y + 0.5}h3`} stroke="#000" />
                    )}
                    <text x="738" y={y + 3} fill={fill ? '#fff' : '#000'}>
                        {text}
                    </text>
                </g>
            ))}
            <text x="736" y="237">105.0323</text>
            <text x="736" y="247">50</text>
            <text x="736" y="263">0.00</text>
            <text x="736" y="278">-50</text>
            <text x="736" y="291">-109.2903</text>
            {bigTimes.map((text, i) => (
                <g key={text}>
                    <path d={`M${i * 64 + 0.5} 295v3`} stroke="#000" />
                    <text x={i * 64} y="308">
                        {text}
                    </text>
                </g>
            ))}
        </g>
    </Svg>
)

const CompareInfo = styled.div`
    display: grid;
    grid-template-columns: auto 1fr;
    align-content: start;
    width: 733px;
    height: 317px;
    padding: 2px 4px 0 4px;
    color: #000;
`

const CompareSide = styled.div`
    padding-top: 4px;
    font: 14px/13px ${ARIAL};
`

const CompareHead = styled.div`
    display: flex;
    align-items: center;
    gap: 5px;
    height: 18px;
    padding-left: 3px;
`

const Minus = styled.button`
    width: 17px;
    height: 15px;
    border: 1px solid;
    border-color: #eec0ee #a070a0 #a070a0 #eec0ee;
    background: #dda0dd;
    font: bold 12px/10px ${PANEL};
`

const Legend = styled.ul`
    width: 159px;
    margin: 0;
    padding: 0;
    list-style: none;
    background: #fff;
    border: 1px solid #000;

    li {
        display: flex;
        align-items: center;
        gap: 3px;
        height: 15px;
        padding-left: 2px;
        border-bottom: 1px solid #000;
        font: bold 14px/14px ${PANEL};
    }

    li:last-child {
        border: 0;
    }
`

const LegendMark = styled.span`
    width: 16px;
    height: 5px;
    border: solid ${(p) => p.$c};
    border-width: 2px 0;
    mask: linear-gradient(90deg, #000 7px, transparent 7px 9px, #000 9px);
`

const MacdLabel = styled.div`
    margin-top: 88px;
    font: 9px/14px ${UI};
`

const MacdBox = styled.div`
    width: 220px;
    height: 24px;
    padding-left: 2px;
    border: 2px solid;
    border-color: #777 #aaa #aaa #777;
    background: #fff;
    font: bold 15px/18px ${PANEL};
`

const CompareWindow = () => (
    <Window title="CHFJPY,M15" x={992} y={647} w={798} h={366} active light>
        <CompareChart />
        <CompareInfo>
            <div>
                <CompareHead>
                    <ChartName $bold>BasketBull.SU_I3_8Pair_JPY</ChartName>
                    <Minus>-</Minus>
                </CompareHead>
                <Legend>
                    {legend.map(([text, color]) => (
                        <li key={text}>
                            <LegendMark $c={color} />
                            {text}
                        </li>
                    ))}
                </Legend>
                <MacdLabel>BBSU_I14 MACD Pair 28.4110</MacdLabel>
                <MacdBox>NZDJPY - CHFJPY (8,21) 28.4</MacdBox>
            </div>
            <CompareSide>
                <Expert $c="#000">
                    BBSU2
                    <Smiley color="#000" />
                </Expert>
                <Count $c="#0f0">
                    48 /2
                    <CloseX $c="#228b22">X</CloseX>
                </Count>
                <Count $c="#c0c0c0">
                    <CloseX $c="#f00">X</CloseX>
                </Count>
                <Sums $top={141}>
                    <Sum $c="#0f0">1.16 /2</Sum>
                    <Sum $c="#c0c0c0">0.00 /0</Sum>
                </Sums>
            </CompareSide>
        </CompareInfo>
    </Window>
)

/* ---------- XAUUSD,M1 trading panel ---------- */

const TOMATO = '#ff6347'
const SILVER = '#c0c0c0'

const Plot = styled.div`
    display: flex;
    flex-direction: column;
    width: 920px;
    height: 742px;
    margin: 2px 0 0 2px;
    border: 1px solid #fff;
    color: #fff;
    font: bold 14px/16px ${PANEL};
    overflow: hidden;
    white-space: nowrap;
`

const Head = styled.div`
    display: flex;
    height: 22px;
    padding: 0 4px;
    color: #ffa500;

    a {
        width: 310px;
        color: inherit;
        font-size: 16px;
        line-height: 22px;
        text-decoration: none;
    }
`

const DownMark = styled.span`
    width: 12px;
    padding-top: 6px;

    &::before {
        content: '';
        display: block;
        width: 0;
        border: 4px solid transparent;
        border-top: 4px solid #fff;
        border-bottom: 0;
    }
`

const StopOut = styled.div`
    width: 250px;
    font-size: 15px;
    line-height: 30px;
`

const face = css`
    border: 2px solid;
    border-color: ${(p) => (p.$green ? '#55a855 #0b640b #0b640b #55a855' : '#fff #a8a8a8 #a8a8a8 #fff')};
    background: ${(p) => (p.$green ? '#228b22' : '#dcdcdc')};
    color: ${(p) => p.$c || (p.$green ? '#fff' : '#000')};
`

const Btn = styled.button`
    ${face}
    display: flex;
    align-items: center;
    justify-content: center;
    flex: none;
    width: ${(p) => p.$w}px;
    height: ${(p) => p.$h || 16}px;
    margin-right: ${(p) => p.$gap || 0}px;
    font: bold ${(p) => p.$size || 11}px/12px ${PANEL};
    overflow: hidden;
    white-space: nowrap;
`

const Field = styled.input`
    flex: none;
    width: ${(p) => p.$w}px;
    height: 15px;
    margin-right: ${(p) => p.$gap || 0}px;
    padding: 0 ${(p) => (p.$w < 45 ? 2 : 5)}px;
    border: 0;
    border-radius: 2px;
    background: ${(p) => (p.$green ? '#008000' : '#fffafa')};
    box-shadow: ${(p) => (p.$green ? 'inset 0 0 0 1px #fff' : 'none')};
    color: ${(p) => p.$c || '#000'};
    font: bold ${(p) => (p.$align ? 13 : 14)}px/15px ${PANEL};
    text-align: ${(p) => p.$align || 'right'};
`

const Panels = styled.div`
    display: grid;
    grid-template-columns: 115px 231px 335px 1fr;
    height: 664px;
`

const Column = styled.div`
    min-width: 0;
`

const Ruled = styled(Column)`
    height: ${(p) => p.$h}px;
    margin-top: 8px;
    border-left: 1px solid #fff;
    box-shadow: -1px 0 0 #1d4f80;

    > :first-child {
        margin-top: -8px;
    }
`

const Rule = styled.hr`
    width: ${(p) => p.$w || 115}px;
    height: ${(p) => p.$thick || 2}px;
    margin: ${(p) => p.$top || 7}px 0 ${(p) => p.$below ?? 7}px;
    border: 0;
    background: #fff;
`

const RankRow = styled.div`
    display: flex;
    align-items: center;
    height: 20px;
    padding-left: 2px;
    color: ${(p) => p.$c};
    font: bold 13px/20px ${MONO};
    white-space: pre;

    &::before {
        content: '';
        width: 8px;
        height: 16px;
        background: ${(p) => p.$bar};
        border: 1px solid;
        border-color: rgba(255, 255, 255, 0.5) rgba(0, 0, 0, 0.3) rgba(0, 0, 0, 0.3) rgba(255, 255, 255, 0.5);
    }

    svg {
        margin: 0 1px;
    }
`

const Arrow = ({ up }) => (
    <svg width="13" height="14" viewBox="0 0 13 14" aria-hidden="true">
        <path
            d={up ? 'M6.500 13V3M1 8l5.500-5.500L12 8' : 'M6.500 1v10M1 6l5.500 5.500L12 6'}
            fill="none"
            stroke={up ? '#32cd32' : TOMATO}
            strokeWidth="3"
        />
    </svg>
)

const PairsTitle = styled.div`
    margin-top: ${(p) => p.$top || 0}px;
    padding-left: 3px;
    color: ${(p) => p.$c};
    font-size: 17px;
    line-height: ${(p) => p.$lh}px;
`

const PairsNote = styled.div`
    padding-left: 3px;
    color: ${SILVER};
    font-size: 13px;
    line-height: 14px;
    margin-bottom: 2px;
`

const PortRow = styled.div`
    display: grid;
    grid-template-columns: 12px 24px 10px 25px 36px;
    align-items: center;
    height: 18px;
    padding-left: 3px;
    font: bold 16px/18px ${ARIAL};

    output {
        display: flex;
        justify-content: flex-end;
        color: ${(p) => (p.$neg ? TOMATO : '#0f0')};
        font: bold 15px/18px ${PANEL};
    }
`

const PortNames = styled.div`
    font: 11px/9px ${PANEL};
    color: ${(p) => p.$c};

    span {
        display: block;
        color: #ee82ee;
    }
`

const Pair2 = styled.div`
    height: 16px;
    background: linear-gradient(${(p) => p.$a} 8px, ${(p) => p.$b} 8px);
`

const Heading = styled.h3`
    display: flex;
    align-items: center;
    height: 16px;
    margin: ${(p) => p.$top || 0}px 0 ${(p) => p.$below || 0}px 7px;
    font: bold 12px/16px ${PANEL};

    &::after {
        content: '';
        flex: 1;
        height: ${(p) => p.$line || 1}px;
        margin-left: 3px;
        background: #fff;
    }
`

const Row = styled.div`
    display: flex;
    align-items: center;
    height: 20px;
    margin-top: ${(p) => p.$top || 0}px;
    padding-left: ${(p) => p.$pad ?? 4}px;
    font-size: ${(p) => p.$size || 14}px;
`

const Text = styled.span`
    flex: none;
    width: ${(p) => p.$w}px;
    color: ${(p) => p.$c || '#fff'};
    font-size: ${(p) => p.$size || 13}px;
    text-align: ${(p) => p.$align || 'left'};
`

const Sessions = styled.div`
    display: grid;
    grid-template-columns: 124px 1fr;
    height: 80px;
`

const Clock = styled.div`
    color: ${(p) => p.$c};
    font: bold 18px/25px ${ARIAL};
`

const State = styled.div`
    display: grid;
    grid-template-columns: 49px 41px 1fr;
    padding: 0 0 0 4px;
    height: 82px;
`

const StateList = styled.div`
    padding-top: 4px;
    font: 14px/25px ${PANEL};
    color: ${SILVER};

    svg {
        display: block;
        margin-bottom: 2px;
    }
`

const Profit = styled.div`
    color: ${TOMATO};
    font-size: 15px;
    line-height: 15px;

    b {
        display: block;
        color: #fff;
    }

    strong {
        display: block;
        font-size: 24px;
        line-height: 24px;
    }
`

const Swaps = styled.div`
    padding-left: 4px;
    color: ${(p) => p.$c};
    font: 12px/15px ${MONO};
    white-space: pre;
`

const PickRow = styled.div`
    display: grid;
    grid-template-columns: repeat(8, 28px);
    align-items: center;
    height: ${(p) => p.$h}px;
    padding-left: 2px;
    font-size: 13px;

    span {
        padding-left: 1px;
    }
`

const Pick = styled.button`
    ${face}
    width: 26px;
    height: 15px;
    background: ${(p) =>
        p.$on ? p.$fill : `linear-gradient(90deg, #dcdcdc 6px, ${p.$fill} 6px 15px, #dcdcdc 15px)`};
`

const CHead = styled.div`
    display: flex;
    height: 16px;
    padding-left: 118px;
    background: #000;
    font-size: 15px;

    span {
        width: 23px;
        color: ${SILVER};
        font-size: 17px;
    }
`

const Quotes = styled.table`
    table-layout: fixed;
    width: 334px;

    td {
        height: 20px;
        vertical-align: middle;
        text-align: center;
    }

    td.pair {
        font: bold 13px/20px ${MONO};
        text-align: left;
    }

    td.line {
        border-left: 1px solid #fff;
        box-shadow: inset 1px 0 0 #1d4f80;
    }

    td.num {
        height: 20px;
        padding-top: 4px;
        color: #1e90ff;
        font-size: 16px;
        line-height: 16px;
    }

    td.gain {
        color: #32cd32;
    }

    td.loss {
        color: ${TOMATO};
    }

    td.close {
        padding-left: 3px;
    }
`

const diag = {
    u: 'M2 10L10 2M4 2h7v7',
    d: 'M2 2l8 8M4 10h7V3'
}

const TrendPair = ({ kind }) => (
    <svg width="24" height="14" viewBox="0 0 24 14" aria-hidden="true">
        {kind.split('').map((k, i) =>
            k === 'n' ? (
                <path key={i} d="M17 1l4 4h-2v4h2l-4 4-4-4h2V5h-2z" fill="#000" stroke={SILVER} />
            ) : (
                <path
                    key={i}
                    d={diag[k]}
                    transform={`translate(${i * 11} 1)`}
                    fill="none"
                    stroke={k === 'u' ? '#32cd32' : TOMATO}
                    strokeWidth="3"
                />
            )
        )}
    </svg>
)

const Trails = styled.div`
    margin: 79px 0 13px;
`

const Matrix = styled.table`
    table-layout: fixed;
    width: 323px;
    margin-left: 2px;
    background: #393939;

    th {
        vertical-align: top;
        text-align: left;
    }

    tbody td {
        height: 22px;
        vertical-align: top;
    }

    td.name {
        font-size: 16px;
        line-height: 17px;
    }

    td.num {
        color: #0f0;
        font-size: 16px;
        line-height: 17px;
        text-align: right;
        padding-right: 3px;
    }

    th.long {
        padding-left: 4px;
    }

    tfoot td {
        height: 49px;
        vertical-align: middle;
        color: ${SILVER};
        font-size: 16px;
        padding-top: 12px;
    }
`

const SwapCell = styled.td`
    padding: ${(p) => (p.$plus ? '1px 0 0 8px' : '6px 0 0 2px')};
    color: ${(p) => (p.$plus ? '#0f0' : TOMATO)};
    font: 12px/${(p) => (p.$plus ? 7 : 12)}px ${PANEL};

    div {
        padding-left: 7px;
    }
`

const Vertical = styled.span`
    display: block;
    writing-mode: vertical-rl;
    transform: rotate(180deg);
    height: ${(p) => p.$h}px;
    width: 18px;
    color: ${(p) => p.$c || '#fff'};
    font: bold ${(p) => p.$size || 16}px/18px ${PANEL};
`

const HeadStack = styled.div`
    display: grid;
    grid-template-columns: 43px 67px;
    row-gap: 2px;
    padding-top: 3px;
`

const Legs = styled.p`
    grid-column: 1 / -1;
    display: flex;
    align-items: center;
    justify-content: space-between;
    height: 20px;
    margin: ${(p) => p.$top || 0}px 0 0;
    padding: 0 4px 0 ${(p) => p.$in || 0}px;
    color: ${(p) => p.$c};
    font-size: 17px;
`

const SpreadCell = styled.div`
    color: ${TOMATO};
    font-size: 16px;
    line-height: 18px;
    text-align: center;
    width: 20px;
`

const Swatch = styled.button`
    display: block;
    width: ${(p) => p.$w}px;
    height: ${(p) => p.$h}px;
    border: 2px solid;
    border-color: #e8e8e8 #b4b4b4 #b4b4b4 #e8e8e8;
    background: ${(p) => p.$fill};
    margin: ${(p) => p.$top || 0}px 0 0 ${(p) => p.$in || 0}px;
`

const Cell = styled.button`
    ${face}
    display: block;
    width: 18px;
    height: 16px;
    background: ${(p) => p.$bg || '#dcdcdc'};

    svg {
        display: block;
    }
`

const SignCell = ({ code }) => {
    if (!code) return null
    const [a, b, tone] = code
    const color = { k: '#000', g: '#008000', G: '#008000', r: '#f00', R: '#f00' }[tone]
    const bg = { G: '#98fb98', R: '#dda0dd' }[tone]
    const small = { u: 'M1 7L5 3M1.500 2.500H5.500V6', d: 'M1 2l4 4M1.500 6.500H5.500V3' }
    return (
        <Cell $bg={bg} aria-label={code}>
            <svg width="14" height="12" viewBox="0 0 14 12">
                <path d={small[a]} transform="translate(0 1)" stroke={color} strokeWidth="1.500" fill="none" />
                <path d={small[b]} transform="translate(7 1)" stroke={color} strokeWidth="1.500" fill="none" />
            </svg>
        </Cell>
    )
}

const Deals = styled.table`
    table-layout: fixed;
    width: 226px;
    color: ${SILVER};
    font-size: 16px;

    th {
        height: 21px;
        line-height: 18px;
        vertical-align: top;
        text-align: left;
    }

    th:last-child {
        text-indent: -12px;
    }

    td {
        height: 14px;
        line-height: 14px;
        color: ${SILVER};
    }

    tr.up td {
        color: #32cd32;
    }

    tr.down td {
        color: ${TOMATO};
    }

    td.lots {
        text-align: right;
    }

    td.profit {
        text-align: center;
    }

    tr td.pairs {
        color: ${SILVER};
        text-align: right;
    }
`

const DealButton = styled.button`
    ${face}
    position: relative;
    display: block;
    width: 11px;
    height: 12px;
    border-width: 1px;
    color: #f00;
    font: 9px/10px ${UI};

    ${(p) =>
        p.$marked &&
        css`
            &::before {
                content: '';
                position: absolute;
                left: -8px;
                top: 0;
                width: 4px;
                height: 11px;
                background: #f00;
                border: 1px solid #fff;
            }
        `}
`

const DealMark = styled.span`
    display: block;
    width: 7px;
    height: 12px;
    border: 2px solid #e8e8e8;
    background: ${(p) => p.$c};
`

const Foot = styled.div`
    display: flex;
    align-items: flex-start;
    justify-content: space-between;
    margin-top: -38px;
`

const Balance = styled.div`
    width: 632px;
    padding: 42px 0 0 2px;
    font: 20px/23px ${ARIAL};

    div:first-child {
        color: #0f0;
    }
`

const Meter = styled.div`
    display: grid;
    grid-template-columns: repeat(10, 25px);
    width: 270px;
    height: 91px;
    margin-right: 16px;
    padding: 9px 0 0 14px;
    background: linear-gradient(#777 2px, transparent 2px) 0 6px / 100% 2px no-repeat,
        linear-gradient(#777 2px, transparent 2px) 0 48px / 100% 2px no-repeat,
        linear-gradient(#777 2px, transparent 2px) 0 76px / 100% 2px no-repeat, #000;
`

const Gauge = styled.div`
    display: flex;
    flex-direction: column;
    align-items: center;
    color: ${SILVER};
    font: bold 11px/12px ${ARIAL};

    em {
        color: #87ceeb;
        font-style: normal;
    }
`

const Stack = styled.div`
    display: flex;
    flex-direction: column-reverse;
    gap: 2px;
    width: 18px;
    height: 39px;
    margin-bottom: 3px;
`

const Block = styled.i`
    height: 6px;
    background: ${(p) => p.$c};
`

const levels = ['#f00', '#ffa500', '#ffd700', '#9acd32', '#0f0']

const colors = {
    EUR: '#000',
    GBP: '#f00',
    CHF: '#00f',
    USD: '#008000',
    AUD: '#d2691e',
    NZD: '#f0f',
    SGD: '#0f0',
    CAD: '#0ff'
}

const ranks = [
    ['NZD', 24, 0], ['CHF', -9, 0], ['SGD', -14, 0], ['GBP', -15, 1],
    ['USD', -20, 1], ['EUR', -26, 0], ['CAD', -32, 1], ['AUD', -36, 0]
]

const pairRows = [
    ['GBP', 'noHP', '39.2', '0.27'], ['GBP', 'noHP', '41', '0.37'], ['NZD', 'noHP', '39.1', '-5.10'],
    ['NZD', 'noHP', '39', '-5.10'], ['CAD', 'CHF', '42', '0.14'], ['NZD', 'CHF', '43', '-2.26'],
    ['GBP', 'USD', '44', '0.18']
]

const portfolios = [
    ['NZD', 'noHP', '39', '-9.93'], ['GBP', 'noHP', '41', '0.37'], ['CAD', 'CHF', '42', '0.14'],
    ['NZD', 'CHF', '43', '-2.26'], ['GBP', 'USD', '44', '0.18']
]

const quotes = [
    ['[EURJPY]+', SILVER, 'uu'],
    ['GBPJPY-', '#778899', 'dd', '0.68', '', '0.07'],
    ['CHFJPY+', '#778899', 'uu', '1.16', '0.06', ''],
    ['USDJPY+', '#fff', 'uu', '0.14', '0.03', ''],
    ['[AUDJPY]-', '#778899', 'dn'],
    ['NZDJPY+', '#778899', 'dd', '-13.5', '', '0.16'],
    ['[SGDJPY]+', SILVER, 'dn'],
    ['CADJPY-', '#fff', 'un', '0.00', '', '0.04']
]

const matrix = [
    ['EUR', 10, ',udG,uuk,uuk,udg,udG,udg,uuk', '-0.19'],
    ['GBP', 24, 'duR,,duR,duR,ddk,ddk,ddk,dur', '-0.04', 1],
    ['CHF', 19, 'uuk,udG,,uuk,udg,udG,udg,uuk', '-0.22'],
    ['USD', 8, 'uuk,udG,uuk,,udg,udG,udg,uuk', '-0.25'],
    ['AUD', 13, 'dur,ddk,dur,dur,,ddk,ddk,dur', '6.20 0.58'],
    ['NZD', 22, 'duR,ddk,duR,duR,ddk,,ddk,dur', '6.30 0.58', 1],
    ['SGD', 21, 'dur,ddk,dur,dur,ddk,ddk,,dur', '-0.15'],
    ['CAD', 16, 'uuk,udg,uuk,uuk,udg,udg,udg,', '1.10 0.11', 1]
]

const shortSwaps = ['-0.16', '-0.28', '-0.08', '-0.14', '-0.81', '-0.89', '-0.16', '-0.35']

const sales = [
    ['GBP', 'GBP.0617.44', '0.02', '0.0'], ['NZD', 'NZD.0596.43', '0.04', '-3.3'],
    ['CAD', 'CAD.0565.42', '0.04', '0.0'], ['NZD', 'NZD.0450.39', '0.06', '-5.1', 1],
    ['NZD', 'NZD.0448.39.1', '0.06', '-5.1', 1], ['GBP', 'GBP.0277.41', '0.02', '0.4', 1],
    ['GBP', 'GBP.0261.39.2', '0.03', '0.3', 1]
]

const buys = [
    ['USD', 'USD.0613.44', '0.03', '0.1'], ['CHF', 'CHF.0590.43', '0.03', '1.0'],
    ['CHF', 'CHF.0564.42', '0.03', '0.1']
]

const sessions = [
    ['00:10', '23:55'], ['11:55', '12:55'], ['14:25', '16:00'], ['19:40', '23:00']
]

const trails = [
    ['ТРАЛИТЬ (в % депо) - КОРЗИНЫ', '2.5', '0.3'],
    ['ТРАЛИТЬ (в % депо) - ПАРЫ', '2.0', '0.3'],
    ['ТРАЛИТЬ (в % депо) - ОРДЕРА: $ 1.2(0.41)', '0.3', '0.1']
]

const meter = [
    ['USD', '6.8', 4], ['EUR', '1.0', 1], ['GBP', '3.5', 2], ['CHF', '8.6', 5], ['CAD', '4.3', 3],
    ['AUD', '6.0', 3], ['NZD', '7.0', 4], ['JPY', '6.7', 4], ['XAU', '5.0', 3], ['XAG', '0.0', 0]
]

const Input = ({ value, label, ...rest }) => {
    const [text, setText] = useState(value)
    return <Field aria-label={label} value={text} onChange={(e) => setText(e.target.value)} {...rest} />
}

const Cols = ({ widths }) => (
    <colgroup>
        {widths.map((w, i) => (
            <col key={i} width={w} />
        ))}
    </colgroup>
)

const Port = ({ row, split }) => {
    const [first, second, no, value] = row
    return (
        <PortRow $neg={value[0] === '-'}>
            <Btn $w={10} $c="#f00">
                X
            </Btn>
            <PortNames $c={second === 'noHP' ? '#fff' : '#0f0'}>
                <span>{first}</span>
                {second}
            </PortNames>
            {split ? (
                <Pair2 $a={colors[first]} $b={colors[second] || '#dcdcdc'} />
            ) : (
                <Btn $w={10} $c="#008000">
                    +
                </Btn>
            )}
            {no}
            <output>{value}</output>
        </PortRow>
    )
}

const DealTable = ({ title, rows }) => (
    <Deals>
        <Cols widths={[13, 9, 97, 11, 41, 55]} />
        <thead>
            <tr>
                <th colSpan={2} />
                <th>{title}</th>
                <th colSpan={3}>Пар Лотов Профит</th>
            </tr>
        </thead>
        <tbody>
            {rows.map(([cur, name, lots, profit, marked]) => (
                <tr key={name} className={profit[0] === '-' ? 'down' : 'up'}>
                    <td>
                        <DealButton $marked={marked}>X</DealButton>
                    </td>
                    <td>
                        <DealMark $c={colors[cur]} />
                    </td>
                    <td>{name}</td>
                    <td className="pairs">1</td>
                    <td className="lots">{lots}</td>
                    <td className="profit">{profit}</td>
                </tr>
            ))}
        </tbody>
    </Deals>
)

const mainPrices = [
    '1281.200', '1281.145', '1281.090', '1281.035', '1280.980', '1280.925', '', '1280.810', '1280.755',
    '1280.700', '1280.645', '1280.585', '1280.530', '1280.475', '1280.420', '1280.365', '1280.310',
    '1280.250', '1280.195', '1280.140', '1280.085', '1280.030', '1279.975'
]
const mainTimes = [
    '16 Jun 2014', '16 Jun 11:57', '16 Jun 11:59', '16 Jun 12:01', '16 Jun 12:03', '16 Jun 12:05',
    '16 Jun 12:07', '16 Jun 12:09', '16 Jun 12:11', '16 Jun 12:13', '16 Jun 12:15'
]

const MainAxes = () => (
    <Svg width="968" height="764" fill="#fff" shapeRendering="crispEdges">
        {mainPrices.map((text, i) => (
            <g key={i}>
                <path d={`M922 ${Math.round(9 + i * 33.2)}.500h3`} stroke="#fff" />
                <text x="928" y={Math.round(12 + i * 33.2)}>
                    {text}
                </text>
            </g>
        ))}
        <rect x="923" y="199" width="46" height="12" />
        <text x="928" y="208" fill="#000">
            1280.870
        </text>
        {mainTimes.map((text, i) => (
            <g key={text}>
                <path d={`M${i * 64 + 2.5} 744v3`} stroke="#fff" />
                <text x={i * 64 + 2} y="757">
                    {text}
                </text>
            </g>
        ))}
    </Svg>
)

const TradePanel = () => (
    <Plot>
        <Head>
            <DownMark />
            <a href="http://BasketBull.SU/">http://BasketBull.SU/</a>
            <StopOut>Стопаут ДЦ: 60%, советника: 0.0%</StopOut>
            <Btn $w={150} $h={20} $size={17} $gap={15}>
                РУЧНОЙ
            </Btn>
            <Btn $w={20} $h={20} $gap={5} aria-label="phone">
                <svg width="16" height="16" viewBox="0 0 16 16">
                    <path d="M1 5c0-4 14-4 14 0v2h-4V5H5v2H1z" fill="#32cd32" />
                    <path d="M6 6h4l4 8H2z" fill="#32cd32" />
                    <circle cx="8" cy="10" r="2" fill="#dcdcdc" />
                </svg>
            </Btn>
            <Btn $w={20} $h={20} aria-label="computer">
                <svg width="16" height="16" viewBox="0 0 16 16">
                    <path d="M3 2h10v7H3zM2 10h12l2 4H0z" fill="#000" />
                    <rect x="4" y="3" width="8" height="5" fill="#c4ccd4" />
                    <path d="M3 12h10" stroke="#dcdcdc" />
                </svg>
            </Btn>
            <Expert>
                BBSU11
                <Smiley color="#fff" />
            </Expert>
        </Head>
        <Panels>
            <Column>
                <Rule />
                {ranks.map(([cur, value, up]) => (
                    <RankRow key={cur} $c={value > 0 ? '#32cd32' : TOMATO} $bar={colors[cur]}>
                        <Arrow up={up} />
                        {`${cur}JPY ${value}`}
                    </RankRow>
                ))}
                <PairsTitle $c="#0f0" $top={24} $lh={20}>
                    =Пары Пар=
                </PairsTitle>
                <PairsNote>BUY/SEL.bsk=prof</PairsNote>
                {pairRows.map((row) => (
                    <Port key={row[2]} row={row} />
                ))}
                <PairsTitle $c="#fff" $lh={18}>
                    =Портфели=
                </PairsTitle>
                {portfolios.map((row) => (
                    <Port key={row[2]} row={row} split />
                ))}
            </Column>
            <Ruled $h={638}>
                <Heading $line={2}>ТОРГОВЛЯ КОРЗИНОЙ</Heading>
                <Row>
                    <Btn $w={105} $gap={5}>КУПИТЬ КОРЗИНУ</Btn>
                    <Btn $w={105}>ЗАКРЫТЬ ПОКУПКИ</Btn>
                </Row>
                <Row>
                    <Btn $w={105} $gap={5}>ПРОДАТЬ КОРЗИНУ</Btn>
                    <Btn $w={105}>ЗАКРЫТЬ ПРОДАЖИ</Btn>
                </Row>
                <Row>
                    <Btn $w={105} $gap={5}>ЗАКРЫТЬ ВСЕ</Btn>
                    <Btn $w={105}>ЗАКРЫТЬ ПРОФИТ</Btn>
                </Row>
                <Row>
                    <Text $w={110} />
                    <Btn $w={105} $green>ЧУЖИЕ ОРДЕРА</Btn>
                </Row>
                <Row>
                    <Text $w={90} $size={12}>Условие: СИГНА</Text>
                    <Btn $w={24} $gap={1} $green>Ф</Btn>
                    <Btn $w={24} $gap={1} $green>ТК</Btn>
                    <Btn $w={24} $gap={1} $green>ФП</Btn>
                    <Btn $w={24} $gap={1}>SAR</Btn>
                    <Btn $w={24}>RSI</Btn>
                </Row>
                <Heading $below={3}>ПРОГРАММНЫЕ ТРАЛЫ и ТЕЙКИ</Heading>
                <Row>
                    <Btn $w={135}>ТРАЛ В ПУНКТАХ</Btn>
                    <Input label="пункты" value="3000" $w={50} $gap={1} />
                    <Input label="шаг пунктов" value="100" $w={29} />
                </Row>
                <Row>
                    <Btn $w={135}>ТРАЛ В ПРОЦЕНТАХ</Btn>
                    <Input label="проценты" value="10.0" $w={50} $gap={1} />
                    <Input label="шаг процентов" value="0.5" $w={29} />
                </Row>
                <Row>
                    <Btn $w={135}>ТРАЛ ПРОТИВ ТРЕНДА</Btn>
                    <Text $w={40} $c={SILVER} $size={12} $align="right">пп.</Text>
                    <Text $w={36} $c={SILVER} $size={12} $align="right">USD</Text>
                </Row>
                <Row>
                    <Btn $w={135}>ПРОГРАММНЫЙ ТЕЙК</Btn>
                    <Input label="тейк в пунктах" value="6000" $w={45} $gap={1} />
                    <Input label="тейк в USD" value="0" $w={39} $c="#999" />
                </Row>
                <Heading $top={25}>РЕАЛЬНЫЕ СТОПЫ и ТЕЙКИ</Heading>
                <Row>
                    <Text $w={40} $c={SILVER}>РИСК:</Text>
                    <Input label="риск" value="5.0" $w={40} $gap={30} />
                    <Btn $w={105}>ВКЛЮЧИТЬ ТРАЛ</Btn>
                </Row>
                <Row>
                    <Text $w={40} $c={SILVER} $align="center">ЛОТ:</Text>
                    <Input label="лот" value="0.01" $w={40} $gap={30} $c="#999" />
                    <Btn $w={65}>БЕЗУБЫТОК</Btn>
                    <Input label="безубыток" value="150" $w={40} />
                </Row>
                <Row>
                    <Btn $w={20}>SL</Btn>
                    <Input label="SL" value="500" $w={40} $gap={1} />
                    <Input label="SL 2" value="123" $w={39} $gap={10} $c="#999" />
                    <Btn $w={105}>УДАЛИТЬ СТОПЫ</Btn>
                </Row>
                <Row>
                    <Btn $w={20}>TP</Btn>
                    <Input label="TP" value="0" $w={40} $gap={1} $c="#999" />
                    <Input label="TP 2" value="246" $w={39} $gap={10} />
                    <Btn $w={105}>УДАЛИТЬ ТЕЙКИ</Btn>
                </Row>
                <Heading $top={5}>ТОРГОВЫЕ СЕССИИ</Heading>
                <Sessions>
                    <div>
                        {sessions.map(([from, to], i) => (
                            <Row key={from}>
                                <Text $w={20} $size={15}>{i + 1}.</Text>
                                <Input
                                    label={`начало ${i + 1}`}
                                    value={from}
                                    $w={40}
                                    $gap={10}
                                    $align="center"
                                    $green={!i}
                                    $c={i ? '#191970' : '#fff'}
                                />
                                <Input
                                    label={`конец ${i + 1}`}
                                    value={to}
                                    $w={40}
                                    $align="center"
                                    $green={!i}
                                    $c={i ? '#191970' : '#fff'}
                                />
                            </Row>
                        ))}
                    </div>
                    <div>
                        <Clock $c="#32cd32">ST:12:16:12</Clock>
                        <Clock $c="#ffa500">LT:13:16:05</Clock>
                    </div>
                </Sessions>
                <Heading $top={4}>СОСТОЯНИЕ КОРЗИНЫ</Heading>
                <State>
                    <StateList>
                        Тренд:
                        <br />
                        Сигнал:
                        <br />
                        Тик:
                    </StateList>
                    <StateList>
                        {[0, 1, 2].map((i) => (
                            <svg key={i} width="22" height="23" viewBox="0 0 22 23">
                                <path d="M0 3l3-3 12 11V3l7 5v14H7l-6-6h8z" fill={TOMATO} />
                            </svg>
                        ))}
                    </StateList>
                    <Profit>
                        <b>ПРОФИТ, USD:</b>
                        <strong>-12.1</strong>
                        Пункты: -125
                        <br />
                        Депо: -2.9 %
                    </Profit>
                </State>
                <Swaps $c="#32cd32"> Buy's: 3, 1 USD,своп=0.0</Swaps>
                <Swaps $c={TOMATO}>Sell's: 7, -13 USD,своп=0.0</Swaps>
                <Row $pad={2} $top={8} $size={13}>Выбор пар для BBSU_I14 MACD Pair</Row>
                <PickRow $h={16}>
                    {Object.keys(colors).map((c) => (
                        <Pick key={c} $fill={colors[c]} $on={c === 'NZD'} aria-label={c} />
                    ))}
                </PickRow>
                <PickRow $h={20}>
                    {Object.keys(colors).map((c) => (
                        <span key={c}>{c}</span>
                    ))}
                </PickRow>
                <PickRow $h={16}>
                    {Object.keys(colors).map((c) => (
                        <Pick key={c} $fill={colors[c]} $on={c === 'CHF'} aria-label={c} />
                    ))}
                </PickRow>
            </Ruled>
            <Ruled $h={638}>
                <CHead>
                    <span>T</span>
                    <span>S</span>
                    Профит buys sells close
                </CHead>
                <Quotes>
                    <Cols widths={[24, 70, 19, 42, 63, 40, 40, 36]} />
                    <tbody>
                        {quotes.map(([pair, color, trend, profit, buy, sell]) => (
                            <tr key={pair}>
                                <td>
                                    <Btn $w={15}>S</Btn>
                                </td>
                                <td className="pair" style={{ color }}>{pair}</td>
                                <td>
                                    <Btn $w={15}>B</Btn>
                                </td>
                                <td className="line">
                                    <TrendPair kind={trend} />
                                </td>
                                <td className={`line num ${profit < 0 ? 'loss' : 'gain'}`}>{profit}</td>
                                <td className="line num">{buy}</td>
                                <td className="line num">{sell}</td>
                                <td className="line close">
                                    {profit && (
                                        <Btn $w={14} $c="#f00">
                                            ✖
                                        </Btn>
                                    )}
                                </td>
                            </tr>
                        ))}
                    </tbody>
                </Quotes>
                <Trails>
                    {trails.map(([text, a, b], i) => (
                        <Row key={text} $pad={1}>
                            <Btn $w={258} $gap={2} $size={12} $green={i === 2}>
                                {text}
                            </Btn>
                            <Input label={text} value={a} $w={38} $gap={2} />
                            <Input label={`${text}, шаг`} value={b} $w={30} />
                        </Row>
                    ))}
                </Trails>
                <Matrix>
                    <Cols widths={[16, 61, 10, 22, 22, 22, 22, 22, 22, 22, 22, 22, 38]} />
                    <thead>
                        <tr>
                            <th colSpan={4}>
                                <HeadStack>
                                    <Btn $w={40} $h={13}>Clear</Btn>
                                    <Btn $w={67} $h={13} $green>autoOpen</Btn>
                                    <Btn $w={40} $h={13} $green>Indi</Btn>
                                    <Btn $w={67} $h={13} $green>autoHedge</Btn>
                                    <Legs $c={TOMATO} $top={15}>== SELL ===&gt;</Legs>
                                    <Legs $c={SILVER} $in={20}>
                                        Spread
                                        <svg width="16" height="14" viewBox="0 0 16 14">
                                            <path d="M0 7h13M8 1l6 6-6 6" fill="none" stroke={SILVER} strokeWidth="3" />
                                        </svg>
                                    </Legs>
                                    <Legs $c="#0f0">== BUY ==</Legs>
                                </HeadStack>
                            </th>
                            {matrix.map(([cur, spread]) => (
                                <th key={cur}>
                                    <Vertical $h={67}>{cur}JPY</Vertical>
                                    <SpreadCell>{spread}</SpreadCell>
                                    <Swatch $w={18} $h={12} $top={2} $fill={colors[cur]} />
                                    {(cur === 'CHF' || cur === 'USD') && (
                                        <Swatch $w={10} $h={9} $top={2} $in={4} $fill="#f00" />
                                    )}
                                </th>
                            ))}
                            <th className="long">
                                <Vertical $h={105} $c={SILVER}>
                                    &lt;-Swap_long
                                </Vertical>
                            </th>
                        </tr>
                    </thead>
                    <tbody>
                        {matrix.map(([cur, spread, codes, swap, marked]) => (
                            <tr key={cur}>
                                <td>
                                    <Swatch $w={12} $h={16} $fill={colors[cur]} />
                                </td>
                                <td className="name">{cur}JPY</td>
                                <td>{marked && <Swatch $w={8} $h={10} $top={3} $fill="#f00" />}</td>
                                <td className="num">{spread}</td>
                                {codes.split(',').map((code, i) => (
                                    <td key={i}>
                                        <SignCell code={code} />
                                    </td>
                                ))}
                                {swap[0] === '-' ? (
                                    <SwapCell>{swap}</SwapCell>
                                ) : (
                                    <SwapCell $plus>
                                        <div>{swap.split(' ')[0]}</div>
                                        {swap.split(' ')[1]}
                                    </SwapCell>
                                )}
                            </tr>
                        ))}
                    </tbody>
                    <tfoot>
                        <tr>
                            <td colSpan={4}>Swap_short-&gt;</td>
                            {shortSwaps.map((value, i) => (
                                <td key={i}>
                                    <Vertical $h={30} $c={TOMATO} $size={11}>
                                        {value}
                                    </Vertical>
                                </td>
                            ))}
                            <td />
                        </tr>
                    </tfoot>
                </Matrix>
            </Ruled>
            <Ruled $h={618}>
                <div>
                    <Rule $w={230} $below={0} />
                    <DealTable title="Продажи:" rows={sales} />
                    <Rule $w={230} $thick={1} $top={201} $below={0} />
                    <DealTable title="Покупки:" rows={buys} />
                </div>
            </Ruled>
        </Panels>
        <Foot>
            <Balance>
                <div>Profit: Pairs=3 Ords=6 Lots=0.16 Pips(+/-) +119 / -262</div>
                <div>Bal 410.65 Equ 398.53 Mar 78.21 Free 320.32 MLevel 509.49%</div>
            </Balance>
            <Meter>
                {meter.map(([cur, value, n]) => (
                    <Gauge key={cur}>
                        <Stack>
                            {levels.slice(0, n).map((color) => (
                                <Block key={color} $c={color} />
                            ))}
                        </Stack>
                        {value}
                        <em>{cur}</em>
                    </Gauge>
                ))}
            </Meter>
        </Foot>
    </Plot>
)

const DialHolder = styled.div`
    position: absolute;
    left: -1px;
    top: 638px;
`

const Dial = () => (
    <DialHolder>
        <svg width="26" height="70" viewBox="0 0 26 70" aria-hidden="true">
            <circle cx="-10" cy="34" r="33" fill="#333" />
            <circle cx="-10" cy="34" r="31" fill="#f4f4f4" stroke="#bbb" strokeWidth="3" />
            <path d="M6 29L14 21A27 27 0 0 1 17 36L7 36z" fill="#f6c070" />
            <path d="M7 36L17 36A27 27 0 0 1 10 52L4 45z" fill="#ee7a4a" />
            <path d="M8 14l-6 8M13 22l-8 5M16 32l-9 1M15 41l-8-2M11 50l-7-5" stroke="#b22" strokeWidth="1.500" />
            <path d="M0 28l6-6-1 8-5 4z" fill="#d11" />
            <rect x="0" y="52" width="4" height="10" fill="#111" />
            <path d="M3 54H0M3 60H0" stroke="#fff" />
        </svg>
    </DialHolder>
)

/* ---------- bottom bars ---------- */

const Tabs = styled.nav`
    display: flex;
    align-items: stretch;
    flex: none;
    height: 23px;
    margin-top: 1px;
    padding: 0 6px 0 3px;
    border-top: 2px solid #000;
    background: #f0f0f0;
    font-size: 11px;

    svg {
        margin-left: auto;
    }
`

const Tab = styled.a`
    display: flex;
    align-items: center;
    height: ${(p) => (p.$on ? 20 : 18)}px;
    margin-top: ${(p) => (p.$on ? -2 : 0)}px;
    padding: 0 11px;
    color: ${(p) => (p.$on ? '#000' : '#777')};
    text-decoration: none;
    background: ${(p) => (p.$on ? '#fff' : 'transparent')};
    border: solid #777;
    border-width: 0 1px 0 0;
    ${(p) => p.$on && 'border: 1px solid #000; border-top: 0; border-bottom-width: 2px;'}
`

const Status = styled.footer`
    display: grid;
    grid-template-columns: 753px 184px 162px 110px 109px 105px 107px 104px 1fr;
    flex: none;
    height: 26px;
    background: #f0f0f0;
    border-top: 1px solid #d0d0d0;
    color: #000;
    font-size: 11px;

    span {
        margin: 2px 0;
        line-height: 22px;
        padding-left: 5px;
        border-left: 1px solid #a8a8a8;
    }

    span:first-child {
        padding-left: 2px;
        border: 0;
    }

    span:last-child {
        display: flex;
        align-items: center;
        gap: 38px;
    }
`

const tabs = [
    'EURJPY,M30', 'XAUUSD,M1', 'GBPJPY,M5', 'CHFJPY,M5', 'USDJPY,H1', 'AUDJPY,H1', 'SGDJPY,H1',
    'CADJPY,M5', 'CHFJPY,M15', 'NZDJPY,M5', 'EURJPY,M15'
]

const Icon = ({ name, on, w }) => (
    <Tool $on={on} $w={w} aria-label={name}>
        <Glyph name={name} />
    </Tool>
)

const App = () => (
    <Page>
        <GlobalStyle />
        <MenuBar>
            {menu.map(([before, key, after]) => (
                <a href="#menu" key={after}>
                    {before}
                    <u>{key}</u>
                    {after}
                </a>
            ))}
        </MenuBar>
        <ToolBar>
            <Grip />
            <Icon name="newChart" w={26} />
            <Caret />
            <Icon name="profiles" w={30} />
            <Caret />
            <Sep />
            <Icon name="market" w={26} />
            <Icon name="aim" />
            <Icon name="star" />
            <Icon name="navigator" />
            <Icon name="tester" w={32} />
            <Sep />
            <Tool $w={106} $dark>
                <Glyph name="order" />
                Новый Ордер
            </Tool>
            <Icon name="book" w={26} />
            <Tool $w={132} $on $dark $start>
                <Glyph name="robot" />
                Авто-торговля
            </Tool>
            <Sep />
            <Grip />
            <Icon name="bars" />
            <Icon name="candle" />
            <Icon name="line" on />
            <Sep />
            <Icon name="zoomIn" w={26} />
            <Icon name="zoomOut" />
            <Sep />
            <Icon name="scroll" on w={26} />
            <Icon name="shift" />
            <Sep />
            <Icon name="indicator" />
            <Caret />
            <Icon name="clock" />
            <Caret />
            <Icon name="template" />
            <Caret />
            <Sep />
            <Grip />
            <Icon name="cursor" on w={26} />
            <Icon name="cross" />
            <Sep />
            <Icon name="vline" />
            <Icon name="hline" />
            <Icon name="trend" />
            <Icon name="chanE" />
            <Icon name="chanD" />
            <Icon name="fibo" />
            <Tool $bold>A</Tool>
            <LabelTool $bold>
                <span>T</span>
            </LabelTool>
            <Icon name="rect" />
            <Icon name="arrows" />
            <Caret />
            <Sep />
            <Grip />
            {['M1', 'M5', 'M15', 'M30', 'H1', 'H4', 'D1', 'W1', 'MN'].map((t) => (
                <Tool key={t} $on={t === 'M15'}>
                    {t}
                </Tool>
            ))}
            <Sep />
            <SearchBox>
                <input aria-label="search" />
                <Glyph name="search" />
            </SearchBox>
            <Badge aria-label="messages">
                <svg width="18" height="18" viewBox="0 0 18 18">
                    <path d="M1 2h16v11h-9l-3 4v-4H1z" fill="#4f6fae" />
                    <text x="5" y="12" fill="#fff" fontSize="11" fontWeight="bold">
                        5
                    </text>
                </svg>
            </Badge>
        </ToolBar>
        <Desktop>
            {charts.map((chart) => (
                <CandleWindow key={chart.title} {...chart} />
            ))}
            <Window title="XAUUSD,M1" x={2} y={54} w={990} h={811}>
                <MainAxes />
                <TradePanel />
            </Window>
            <CompareWindow />
            <Dial />
        </Desktop>
        <Tabs>
            {tabs.map((tab) => (
                <Tab href="#tab" key={tab} $on={tab === 'CHFJPY,M15'}>
                    {tab}
                </Tab>
            ))}
            <svg width="24" height="20" aria-hidden="true">
                <path d="M6 6v8l-4-4zM18 6v8l4-4z" fill="#999" />
            </svg>
        </Tabs>
        <Status>
            <span>Для справки, нажмите F1</span>
            <span>BBSU11-8-JPY</span>
            <span>2014.06.16 02:15</span>
            <span>O: 113.257</span>
            <span>H: 113.270</span>
            <span>L: 113.246</span>
            <span>C: 113.262</span>
            <span>V: 236</span>
            <span>
                <svg width="23" height="12" aria-hidden="true">
                    {Array.from({ length: 8 }, (_, i) => (
                        <g key={i}>
                            <rect x={i * 3} y="0" width="2" height={10 - i} fill="#5a7a20" />
                            <rect x={i * 3} y={11 - i} width="2" height={1 + i} fill="#1f4f6a" />
                        </g>
                    ))}
                </svg>
                2342/14 kb
            </span>
        </Status>
    </Page>
)

export default App
